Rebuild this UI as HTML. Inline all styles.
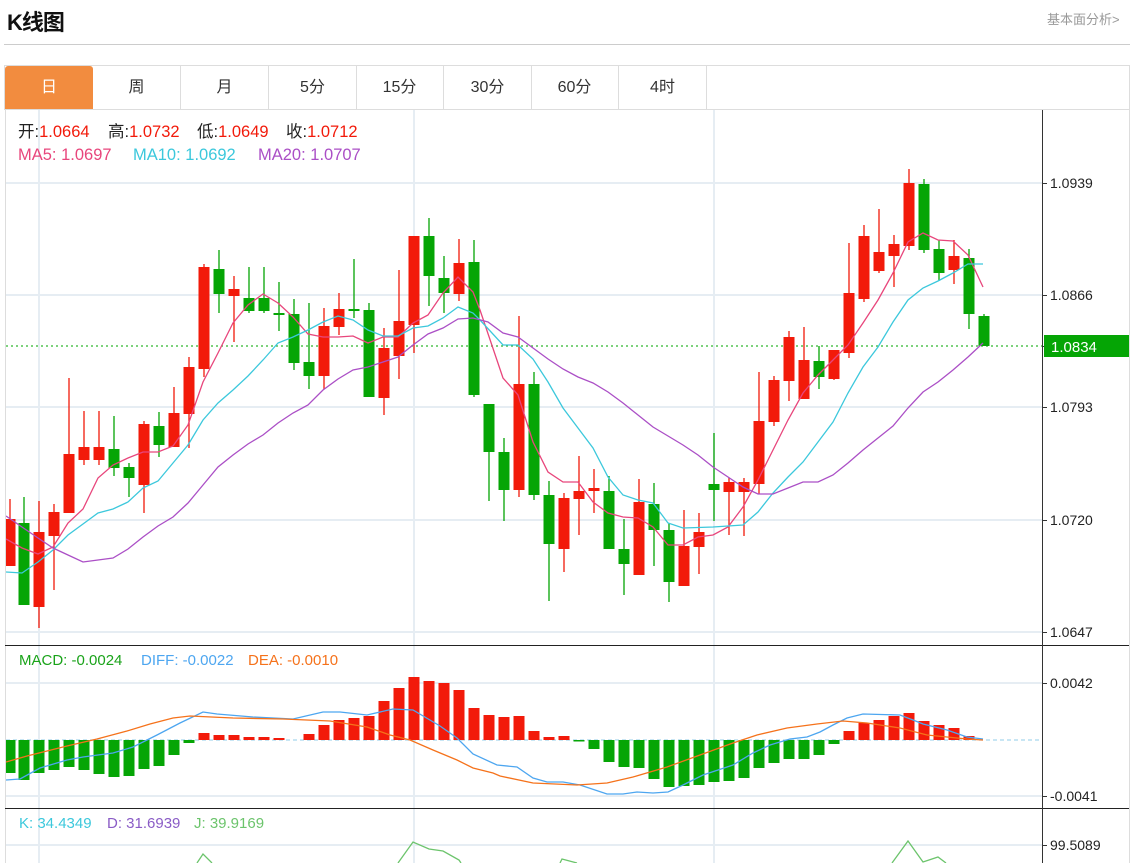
<!DOCTYPE html>
<html><head><meta charset="utf-8"><style>
*{margin:0;padding:0;box-sizing:border-box}
body{width:1146px;height:863px;overflow:hidden;background:#fff;font-family:"Liberation Sans","Noto Sans CJK SC",sans-serif;position:relative}
.t{position:absolute;left:7px;top:5px;font-size:22px;font-weight:bold;color:#111;letter-spacing:-1px}
.lk{position:absolute;left:1047px;top:9px;font-size:13px;color:#999}
.hl{position:absolute;left:4px;top:44px;width:1126px;height:1px;background:#ccc}
.tabs{position:absolute;left:4px;top:65px;width:1126px;height:45px;border:1px solid #ddd;border-bottom:1px solid #ddd}
.tab{position:absolute;top:0;height:43px;width:88px;text-align:center;line-height:43px;font-size:16px;color:#333;border-right:1px solid #ddd}
.tab.a{background:#f28c3f;color:#fff;border-radius:3px 3px 0 0;border-right:none}
svg{position:absolute;left:0;top:0}
</style></head><body>
<div class="t">K线图</div>
<div class="lk">基本面分析&gt;</div>
<div class="hl"></div>
<div class="tabs">
<div class="tab a" style="left:0">日</div>
<div class="tab" style="left:88px">周</div>
<div class="tab" style="left:176px">月</div>
<div class="tab" style="left:264px">5分</div>
<div class="tab" style="left:351px">15分</div>
<div class="tab" style="left:439px">30分</div>
<div class="tab" style="left:526px">60分</div>
<div class="tab" style="left:614px">4时</div>
</div>
<svg width="1146" height="863" viewBox="0 0 1146 863" style="top:0">
<defs><clipPath id="c"><rect x="6" y="110" width="1036" height="753"/></clipPath></defs>
<line x1="5.5" y1="110" x2="5.5" y2="863" stroke="#ddd"/>
<line x1="1129.5" y1="110" x2="1129.5" y2="863" stroke="#ddd"/>
<g stroke="#e6edf3" stroke-width="2">
<line x1="6" y1="183" x2="1042" y2="183"/><line x1="6" y1="295" x2="1042" y2="295"/><line x1="6" y1="407" x2="1042" y2="407"/><line x1="6" y1="520" x2="1042" y2="520"/><line x1="6" y1="632" x2="1042" y2="632"/>
<line x1="6" y1="683" x2="1042" y2="683"/><line x1="6" y1="796" x2="1042" y2="796"/><line x1="6" y1="845" x2="1042" y2="845"/>
<line x1="39" y1="110" x2="39" y2="863"/><line x1="414" y1="110" x2="414" y2="863"/><line x1="714" y1="110" x2="714" y2="863"/>
</g>
<line x1="5" y1="645.5" x2="1129" y2="645.5" stroke="#222"/>
<line x1="5" y1="808.5" x2="1129" y2="808.5" stroke="#222"/>
<line x1="1042.5" y1="110" x2="1042.5" y2="863" stroke="#333"/>
<g stroke="#333"><line x1="1042" y1="183.5" x2="1047" y2="183.5"/><line x1="1042" y1="295.5" x2="1047" y2="295.5"/><line x1="1042" y1="407.5" x2="1047" y2="407.5"/><line x1="1042" y1="520.5" x2="1047" y2="520.5"/><line x1="1042" y1="632.5" x2="1047" y2="632.5"/><line x1="1042" y1="683.5" x2="1047" y2="683.5"/><line x1="1042" y1="796.5" x2="1047" y2="796.5"/><line x1="1042" y1="845.5" x2="1047" y2="845.5"/><line x1="1042" y1="346.5" x2="1047" y2="346.5"/></g>
<g font-size="14" fill="#222" font-family="Liberation Sans,sans-serif">
<text x="1050" y="188">1.0939</text><text x="1050" y="300">1.0866</text><text x="1050" y="412">1.0793</text><text x="1050" y="525">1.0720</text><text x="1050" y="637">1.0647</text>
<text x="1050" y="688">0.0042</text><text x="1050" y="801">-0.0041</text><text x="1050" y="850">99.5089</text>
</g>
<rect x="1044" y="335" width="85" height="22" fill="#05a505"/>
<text x="1051" y="352" font-size="15" fill="#fff">1.0834</text>
<line x1="6" y1="346" x2="1042" y2="346" stroke="#2fb82f" stroke-dasharray="2,3" stroke-width="1.3"/>
<line x1="6" y1="740" x2="1040" y2="740" stroke="#a8d8ee" stroke-dasharray="4,3" stroke-width="1.3"/>
<g clip-path="url(#c)">
<g fill="#f21a0a" stroke="#f21a0a" stroke-width="1.3">
<path d="M10 499V566M39 501V628M54 504V590M69 378V513M84 411V465M99 411V465M144 421V513M174 387V447M189 357V448M204 264V377M234 276V342M324 308V389M339 293V335M384 328V415M399 270V379M414 236V353M459 239V301M519 316V497M564 493V572M579 456V535M594 469V513M639 479V575M684 510V586M699 513V574M729 478V535M744 478V536M759 372V494M774 376V426M789 331V401M804 327V399M834 350V380M849 243V358M864 225V302M879 209V273M894 235V287M909 169V250M954 240V284"/>
<g stroke="none">
<rect x="4.5" y="519" width="11" height="47"/><rect x="33.5" y="532" width="11" height="75"/><rect x="48.5" y="512" width="11" height="24"/><rect x="63.5" y="454" width="11" height="59"/><rect x="78.5" y="447" width="11" height="13"/><rect x="93.5" y="447" width="11" height="13"/><rect x="138.5" y="424" width="11" height="61"/><rect x="168.5" y="413" width="11" height="34"/><rect x="183.5" y="367" width="11" height="47"/><rect x="198.5" y="267" width="11" height="102"/><rect x="228.5" y="289" width="11" height="7"/><rect x="318.5" y="326" width="11" height="50"/><rect x="333.5" y="309" width="11" height="18"/><rect x="378.5" y="348" width="11" height="50"/><rect x="393.5" y="321" width="11" height="35"/><rect x="408.5" y="236" width="11" height="89"/><rect x="453.5" y="263" width="11" height="31"/><rect x="513.5" y="384" width="11" height="106"/><rect x="558.5" y="498" width="11" height="51"/><rect x="573.5" y="491" width="11" height="8"/><rect x="588.5" y="488" width="11" height="3"/><rect x="633.5" y="502" width="11" height="73"/><rect x="678.5" y="546" width="11" height="40"/><rect x="693.5" y="532" width="11" height="15"/><rect x="723.5" y="482" width="11" height="10"/><rect x="738.5" y="482" width="11" height="10"/><rect x="753.5" y="421" width="11" height="63"/><rect x="768.5" y="380" width="11" height="42"/><rect x="783.5" y="337" width="11" height="44"/><rect x="798.5" y="360" width="11" height="39"/><rect x="828.5" y="350" width="11" height="29"/><rect x="843.5" y="293" width="11" height="60"/><rect x="858.5" y="236" width="11" height="63"/><rect x="873.5" y="252" width="11" height="19"/><rect x="888.5" y="244" width="11" height="12"/><rect x="903.5" y="183" width="11" height="63"/><rect x="948.5" y="256" width="11" height="14"/>
</g></g>
<g fill="#05a505" stroke="#05a505" stroke-width="1.3">
<path d="M24 497V605M114 416V476M129 463V497M159 412V457M219 250V313M249 267V313M264 267V313M279 282V331M294 299V370M309 303V389M354 259V318M369 303V397M429 218V306M444 256V313M474 240V397M489 404V501M504 438V521M534 372V500M549 481V601M609 476V549M624 519V595M654 483V566M669 523V602M714 433V521M819 346V389M924 179V253M939 240V281M969 249V329M984 314V346"/>
<g stroke="none">
<rect x="18.5" y="523" width="11" height="82"/><rect x="108.5" y="449" width="11" height="19"/><rect x="123.5" y="467" width="11" height="11"/><rect x="153.5" y="426" width="11" height="19"/><rect x="213.5" y="269" width="11" height="25"/><rect x="243.5" y="298" width="11" height="13"/><rect x="258.5" y="298" width="11" height="13"/><rect x="273.5" y="313" width="11" height="2"/><rect x="288.5" y="314" width="11" height="49"/><rect x="303.5" y="362" width="11" height="14"/><rect x="348.5" y="309" width="11" height="2"/><rect x="363.5" y="310" width="11" height="87"/><rect x="423.5" y="236" width="11" height="40"/><rect x="438.5" y="278" width="11" height="15"/><rect x="468.5" y="262" width="11" height="133"/><rect x="483.5" y="404" width="11" height="48"/><rect x="498.5" y="452" width="11" height="38"/><rect x="528.5" y="384" width="11" height="111"/><rect x="543.5" y="495" width="11" height="49"/><rect x="603.5" y="491" width="11" height="58"/><rect x="618.5" y="549" width="11" height="15"/><rect x="648.5" y="504" width="11" height="26"/><rect x="663.5" y="530" width="11" height="52"/><rect x="708.5" y="484" width="11" height="6"/><rect x="813.5" y="361" width="11" height="16"/><rect x="918.5" y="184" width="11" height="66"/><rect x="933.5" y="249" width="11" height="24"/><rect x="963.5" y="258" width="11" height="56"/><rect x="978.5" y="316" width="11" height="30"/>
</g></g>
<g fill="none" stroke-width="1.3">
<polyline stroke="#e8467c" points="6,539 22,548 38,554 53,547 68,523 83,509 98,478 113,465 128,458 143,452 158,452 173,446 188,425 203,382 218,353 233,323 248,305 263,294 278,303 293,317 308,334 323,337 338,337 353,336 368,343 383,337 398,337 413,323 428,315 443,293 458,277 473,292 480,310 503,378 518,395 533,442 548,472 563,482 578,482 593,502 608,513 623,517 638,518 653,527 668,545 683,545 698,537 713,535 728,527 743,507 758,480 773,450 788,420 803,393 818,375 833,360 848,345 863,323 878,300 893,273 908,242 923,233 938,240 953,241 968,255 983,287"/>
<polyline stroke="#3cc8dc" points="6,572 22,573 38,562 53,550 68,535 83,524 98,513 113,509 128,502 143,488 158,481 173,463 188,445 203,420 218,403 233,390 248,376 263,360 278,343 293,337 308,330 323,322 338,316 353,320 368,330 383,336 398,336 413,328 428,326 443,318 458,307 473,313 480,320 503,345 518,345 533,359 548,382 563,408 578,428 593,448 608,477 623,495 638,500 653,503 668,523 683,528 713,527 743,525 758,512 773,493 788,477 803,462 818,442 833,422 848,393 863,367 878,347 893,322 908,300 923,288 938,281 953,273 968,264 983,264"/>
<polyline stroke="#ab4fc6" points="6,516 22,527 38,538 53,548 68,555 83,562 98,560 113,558 128,549 143,537 158,526 173,517 188,503 203,485 218,467 233,455 248,444 263,435 278,423 293,413 308,405 323,390 338,379 353,370 368,367 383,362 398,357 413,345 428,334 443,328 458,319 473,318 488,322 503,333 518,337 533,348 548,359 563,369 578,377 593,383 608,392 623,403 638,415 653,427 668,436 683,445 698,455 713,467 728,477 743,487 758,494 773,494 788,488 803,482 818,482 833,475 848,463 863,450 878,438 893,426 908,408 923,392 938,382 953,370 968,357 983,343"/>
</g>
<g fill="#05a505" stroke="none">
<rect x="4.5" y="740" width="11" height="33"/><rect x="18.5" y="740" width="11" height="40"/><rect x="33.5" y="740" width="11" height="33"/><rect x="48.5" y="740" width="11" height="30"/><rect x="63.5" y="740" width="11" height="27"/><rect x="78.5" y="740" width="11" height="30"/><rect x="93.5" y="740" width="11" height="34"/><rect x="108.5" y="740" width="11" height="37"/><rect x="123.5" y="740" width="11" height="36"/><rect x="138.5" y="740" width="11" height="29"/><rect x="153.5" y="740" width="11" height="26"/><rect x="168.5" y="740" width="11" height="15"/><rect x="183.5" y="740" width="11" height="3"/>
<rect x="573.5" y="740" width="11" height="1.5"/><rect x="588.5" y="740" width="11" height="9"/><rect x="603.5" y="740" width="11" height="22"/><rect x="618.5" y="740" width="11" height="27"/><rect x="633.5" y="740" width="11" height="28"/><rect x="648.5" y="740" width="11" height="39"/><rect x="663.5" y="740" width="11" height="47"/><rect x="678.5" y="740" width="11" height="46"/><rect x="693.5" y="740" width="11" height="45"/><rect x="708.5" y="740" width="11" height="42"/><rect x="723.5" y="740" width="11" height="41"/><rect x="738.5" y="740" width="11" height="38"/><rect x="753.5" y="740" width="11" height="28"/><rect x="768.5" y="740" width="11" height="23"/><rect x="783.5" y="740" width="11" height="19"/><rect x="798.5" y="740" width="11" height="19"/><rect x="813.5" y="740" width="11" height="15"/><rect x="828.5" y="740" width="11" height="4"/>
</g>
<g fill="#f21a0a" stroke="none">
<rect x="198.5" y="733" width="11" height="7"/><rect x="213.5" y="735" width="11" height="5"/><rect x="228.5" y="735" width="11" height="5"/><rect x="243.5" y="737" width="11" height="3"/><rect x="258.5" y="737" width="11" height="3"/><rect x="273.5" y="738" width="11" height="2"/><rect x="303.5" y="734" width="11" height="6"/><rect x="318.5" y="725" width="11" height="15"/><rect x="333.5" y="720" width="11" height="20"/><rect x="348.5" y="718" width="11" height="22"/><rect x="363.5" y="716" width="11" height="24"/><rect x="378.5" y="701" width="11" height="39"/><rect x="393.5" y="688" width="11" height="52"/><rect x="408.5" y="677" width="11" height="63"/><rect x="423.5" y="681" width="11" height="59"/><rect x="438.5" y="683" width="11" height="57"/><rect x="453.5" y="690" width="11" height="50"/><rect x="468.5" y="708" width="11" height="32"/><rect x="483.5" y="715" width="11" height="25"/><rect x="498.5" y="717" width="11" height="23"/><rect x="513.5" y="716" width="11" height="24"/><rect x="528.5" y="731" width="11" height="9"/><rect x="543.5" y="737" width="11" height="3"/><rect x="558.5" y="736" width="11" height="4"/>
<rect x="843.5" y="731" width="11" height="9"/><rect x="858.5" y="723" width="11" height="17"/><rect x="873.5" y="720" width="11" height="20"/><rect x="888.5" y="716" width="11" height="24"/><rect x="903.5" y="713" width="11" height="27"/><rect x="918.5" y="721" width="11" height="19"/><rect x="933.5" y="725" width="11" height="15"/><rect x="948.5" y="728" width="11" height="12"/><rect x="963.5" y="736" width="11" height="4"/>
</g>
<g fill="none" stroke-width="1.3">
<polyline stroke="#4da6f0" points="6,780 20,779 40,768 67,760 83,757 113,753 133,747 157,735 180,723 203,712 217,714 253,717 293,719 323,712 340,712 367,715 393,709 413,710 440,726 457,738 473,754 497,765 517,767 533,778 547,782 563,782 580,785 607,794 623,794 637,792 653,793 668,792 683,785 703,775 733,765 753,753 770,745 790,739 807,737 820,732 833,725 847,718 863,714 900,715 913,720 923,724 947,730 967,737 983,739"/>
<polyline stroke="#f5721b" points="6,762 27,756 67,746 97,739 127,731 150,724 173,718 190,716 233,718 283,719 330,721 367,727 390,735 410,740 433,750 457,760 473,768 493,773 500,776 533,783 577,785 607,783 633,777 667,767 700,755 733,743 757,735 787,728 817,724 843,721 867,723 900,728 927,735 967,739 983,740"/>
<polyline stroke="#6cc46c" points="197,863 203,854 212,863"/>
<polyline stroke="#6cc46c" points="398,863 413,842 429,849 443,851 459,860 461,863"/>
<polyline stroke="#6cc46c" points="560,863 562,859 577,863"/>
<polyline stroke="#6cc46c" points="892,863 908,841 923,862 938,857 946,863"/>
</g>
</g>
<g font-size="16.5" font-family="Liberation Sans,Noto Sans CJK SC,sans-serif">
<text y="137"><tspan x="18" fill="#222">开:</tspan><tspan fill="#f21a0a">1.0664</tspan><tspan x="108" fill="#222">高:</tspan><tspan fill="#f21a0a">1.0732</tspan><tspan x="197" fill="#222">低:</tspan><tspan fill="#f21a0a">1.0649</tspan><tspan x="286" fill="#222">收:</tspan><tspan fill="#f21a0a">1.0712</tspan></text>
<text y="160"><tspan x="18" fill="#e8467c">MA5: 1.0697</tspan><tspan x="133" fill="#3cc8dc">MA10: 1.0692</tspan><tspan x="258" fill="#ab4fc6">MA20: 1.0707</tspan></text>
</g>
<g font-size="15" font-family="Liberation Sans,sans-serif">
<text y="665"><tspan x="19" fill="#1aa31a">MACD: -0.0024</tspan><tspan x="141" fill="#4da6f0">DIFF: -0.0022</tspan><tspan x="248" fill="#f5721b">DEA: -0.0010</tspan></text>
<text y="828"><tspan x="19" fill="#3cc8dc">K: 34.4349</tspan><tspan x="107" fill="#8a5cc6">D: 31.6939</tspan><tspan x="194" fill="#6cc46c">J: 39.9169</tspan></text>
</g>
</svg>
</body></html>
